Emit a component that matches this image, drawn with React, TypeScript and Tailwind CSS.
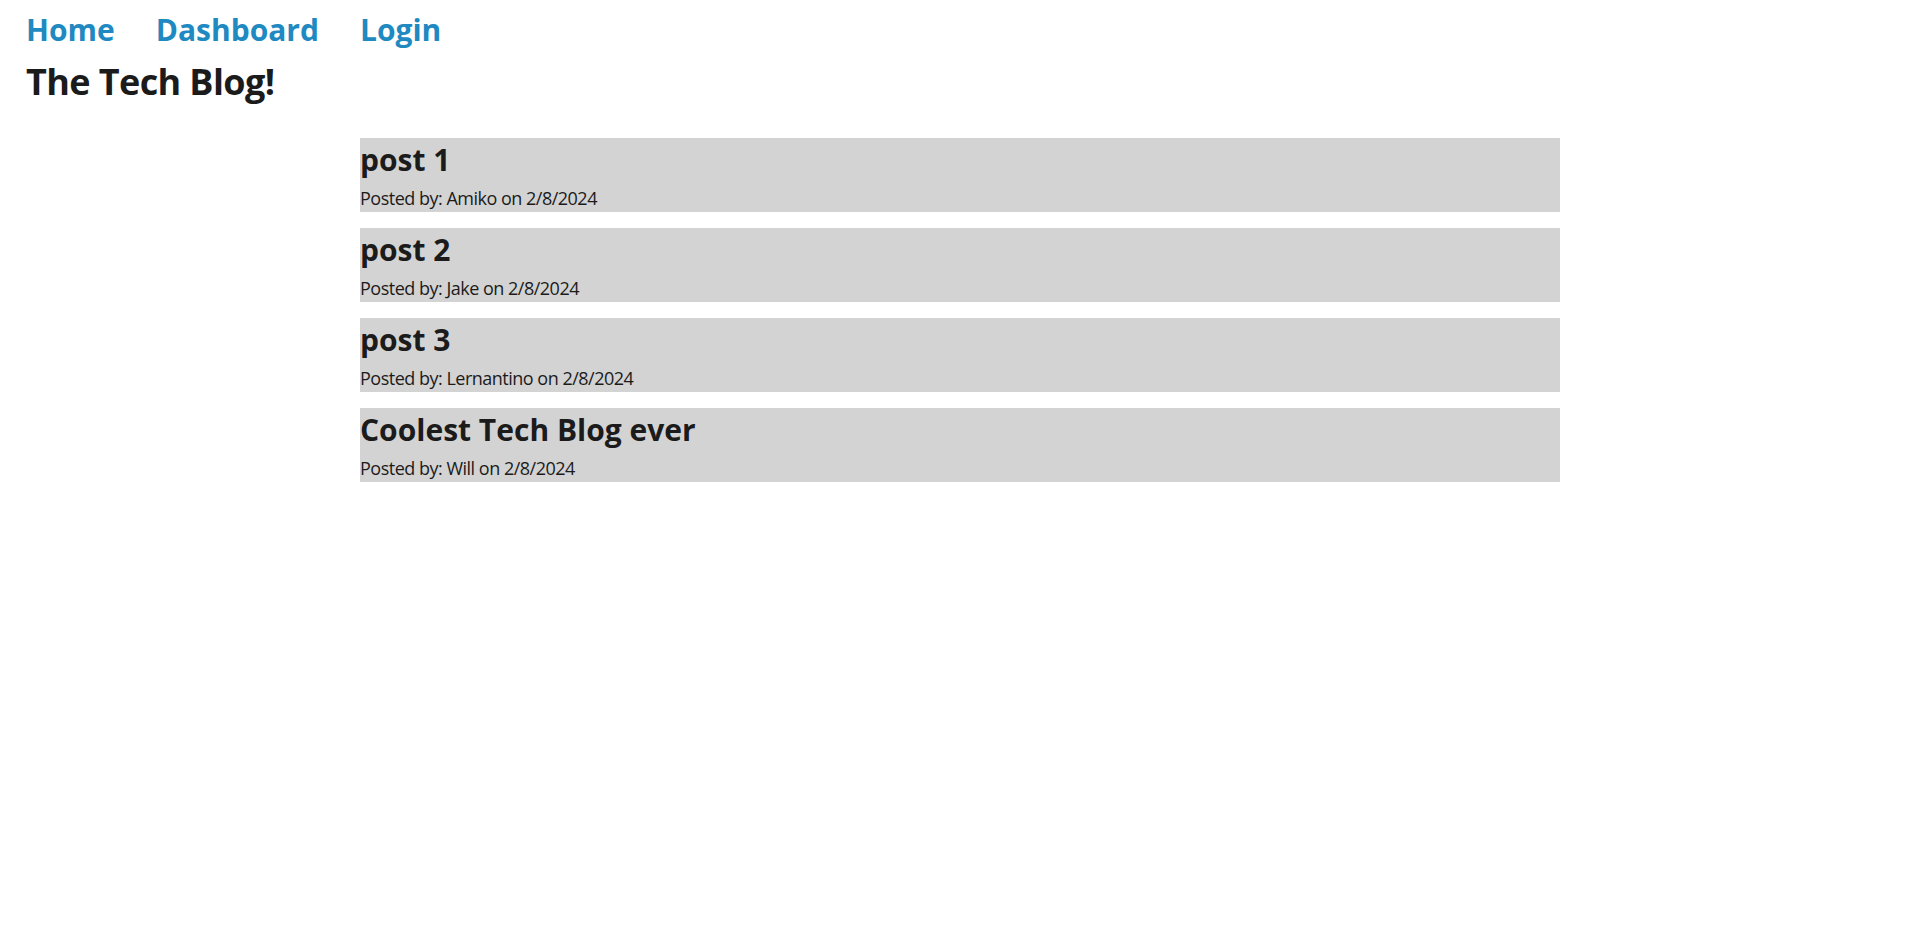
import React from "react";

const posts = [
  { title: "post 1", author: "Amiko", date: "2/8/2024" },
  { title: "post 2", author: "Jake", date: "2/8/2024" },
  { title: "post 3", author: "Lernantino", date: "2/8/2024" },
  { title: "Coolest Tech Blog ever", author: "Will", date: "2/8/2024" },
];

export default function App() {
  return (
    <div
      className="min-h-[928px] bg-white text-[#1b1b1b]"
      style={{ fontFamily: '"Open Sans", "Noto Sans", sans-serif' }}
    >
      <header className="px-[26px] pt-[10px]">
        <nav className="flex gap-[41px] text-[30px] font-bold leading-[40px] text-[#1f89c1]">
          <a href="#">Home</a>
          <a href="#">Dashboard</a>
          <a href="#">Login</a>
        </nav>
        <h1 className="mt-[7px] text-[36px] font-bold leading-[50px] tracking-[-0.6px]">
          The Tech Blog!
        </h1>
      </header>
      <main className="mx-auto mt-[31px] flex w-[1200px] flex-col gap-[16px]">
        {posts.map((p) => (
          <article key={p.title} className="bg-[#d3d3d3] pt-[2px]">
            <h2 className="text-[30px] font-bold leading-[40px]">{p.title}</h2>
            <p className="mt-[4px] text-[18px] leading-[28px] tracking-[-0.5px]">
              Posted by: {p.author} on {p.date}
            </p>
          </article>
        ))}
      </main>
    </div>
  );
}
